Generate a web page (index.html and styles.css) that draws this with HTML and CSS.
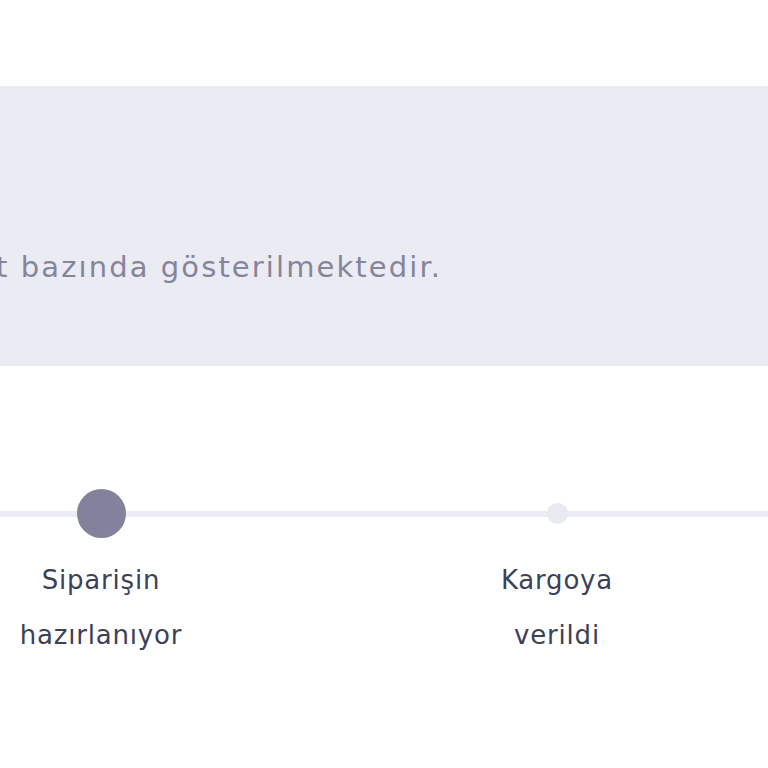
FILE: index.html
```html
<!DOCTYPE html>
<html lang="tr">
<head>
<meta charset="utf-8">
<link rel="stylesheet" href="styles.css">
</head>
<body>
<div class="page">
  <section class="notice">
    <p class="notice-text">t bazında gösterilmektedir.</p>
  </section>
  <section class="timeline">
    <div class="steps">
      <div class="step">
        <span class="dot dot-active"></span>
        <div class="label"><span>Siparişin</span><span>hazırlanıyor</span></div>
      </div>
      <div class="step">
        <span class="dot dot-small"></span>
        <div class="label"><span>Kargoya</span><span>verildi</span></div>
      </div>
    </div>
  </section>
</div>
</body>
</html>
```

FILE: styles.css
```css
html, body {
  margin: 0;
  padding: 0;
  background: #ffffff;
  overflow: hidden;
}
.page {
  width: 768px;
  height: 768px;
  padding-top: 86px;
  box-sizing: border-box;
  font-family: "DejaVu Sans", "Liberation Sans", sans-serif;
}
.notice {
  background: #ebebf4;
  height: 280px;
  display: flex;
  align-items: flex-start;
  overflow: hidden;
}
.notice-text {
  margin: 163px 0 0 -4px;
  font-size: 29px;
  line-height: 36px;
  letter-spacing: 2.1px;
  color: #85859a;
  white-space: nowrap;
}
.timeline {
  position: relative;
  padding-top: 123px;
  overflow: hidden;
}
.timeline::before {
  content: "";
  position: absolute;
  left: 0;
  right: 0;
  top: 145px;
  height: 6px;
  background: #ebebf3;
}
.steps {
  display: flex;
  margin-left: -127px;
}
.step {
  flex: 0 0 456px;
  display: flex;
  flex-direction: column;
  align-items: center;
  position: relative;
}
.dot {
  display: block;
  border-radius: 50%;
}
.dot-active {
  width: 49px;
  height: 49px;
  background: #82829c;
}
.dot-small {
  width: 21px;
  height: 21px;
  margin: 14px 0;
  background: #e9e9f2;
}
.label {
  margin-top: 15px;
  display: flex;
  flex-direction: column;
  align-items: center;
  font-size: 26px;
  line-height: 55px;
  letter-spacing: 0.8px;
  color: #3d4059;
}
```
